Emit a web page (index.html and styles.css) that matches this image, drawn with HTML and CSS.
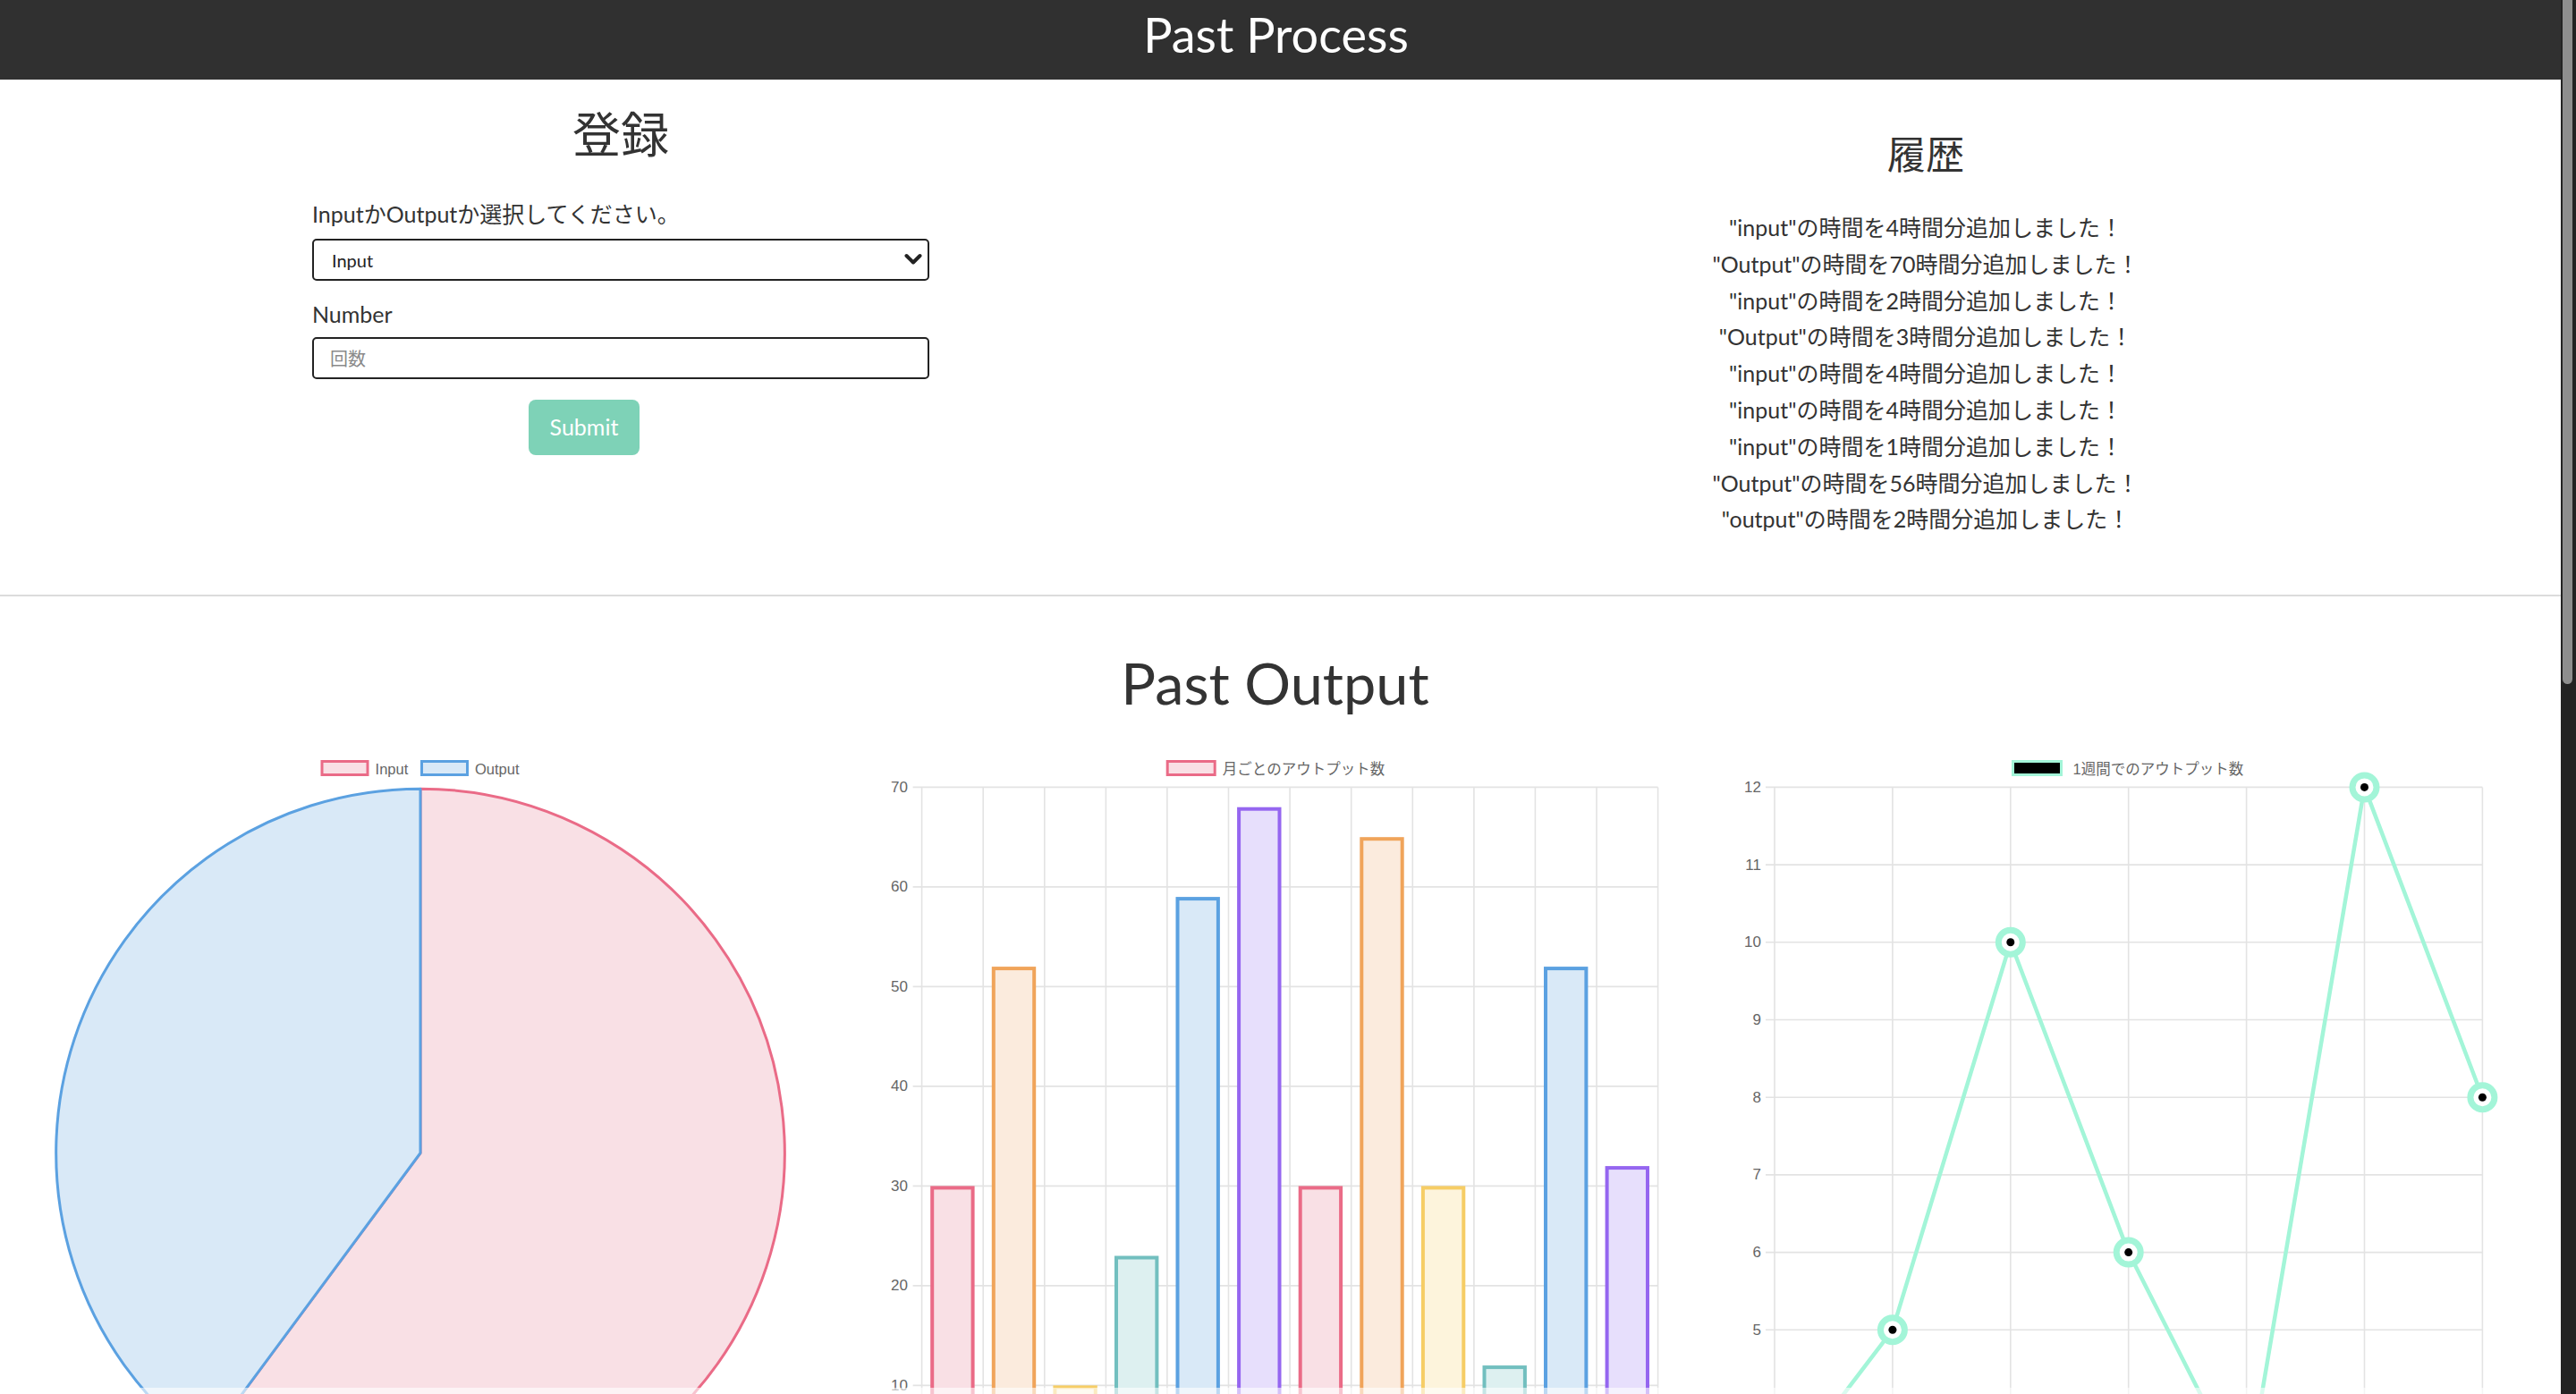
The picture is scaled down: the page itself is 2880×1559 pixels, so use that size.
FILE: index.html
```html
<!DOCTYPE html>
<html lang="ja">
<head>
<meta charset="utf-8">
<title>Past Process</title>
<link rel="stylesheet" href="styles.css">
</head>
<body>
<div class="window">
  <div class="page">
    <header class="site-header">
      <h1 class="site-title">Past Process</h1>
    </header>

    <section class="top">
      <div class="register">
        <h2 class="register-title">登録</h2>
        <form class="register-form">
          <label class="field-label" for="kind">InputかOutputか選択してください。</label>
          <div class="select-wrap">
            <select id="kind" class="field field-select">
              <option>Input</option>
              <option>Output</option>
            </select>
            <svg class="chevron" width="20" height="14" viewBox="0 0 20 14"><path d="M2.5 3 L10 10.5 L17.5 3" fill="none" stroke="#222" stroke-width="4" stroke-linecap="round" stroke-linejoin="round"/></svg>
          </div>
          <label class="field-label field-label-number" for="num">Number</label>
          <input id="num" class="field" type="text" placeholder="回数">
          <div class="submit-row">
            <button type="button" class="submit">Submit</button>
          </div>
        </form>
      </div>

      <div class="history">
        <h3 class="history-title">履歴</h3>
        <ul class="history-list">
          <li>"input"の時間を4時間分追加しました！</li>
          <li>"Output"の時間を70時間分追加しました！</li>
          <li>"input"の時間を2時間分追加しました！</li>
          <li>"Output"の時間を3時間分追加しました！</li>
          <li>"input"の時間を4時間分追加しました！</li>
          <li>"input"の時間を4時間分追加しました！</li>
          <li>"input"の時間を1時間分追加しました！</li>
          <li>"Output"の時間を56時間分追加しました！</li>
          <li>"output"の時間を2時間分追加しました！</li>
        </ul>
      </div>
    </section>

    <hr class="divider">

    <section class="output">
      <h1 class="output-title">Past Output</h1>
      <div class="charts">
        <div class="chart">
          <svg class="chart-svg" width="954" height="720" viewBox="0 0 954 720">
            <rect x="367" y="11.5" width="51" height="15" fill="#f9e0e5" stroke="#ea6b87" stroke-width="3"/>
            <text class="legend-text" x="426.6" y="19.5">Input</text>
            <rect x="478.5" y="11.5" width="51" height="15" fill="#d9e9f7" stroke="#5ba1e1" stroke-width="3"/>
            <text class="legend-text" x="538" y="19.5">Output</text>
            <path d="M477 449.5 L477 42.2 A407.3 407.3 0 1 1 234.7 776.9 Z" fill="#f9e0e5" stroke="#ea6b87" stroke-width="3" stroke-linejoin="round"/>
            <path d="M477 449.5 L234.7 776.9 A407.3 407.3 0 0 1 477 42.2 Z" fill="#d9e9f7" stroke="#5ba1e1" stroke-width="3" stroke-linejoin="round"/>
          </svg>
        </div>

        <div class="chart">
          <svg class="chart-svg" width="954" height="720" viewBox="0 0 954 720">
            <rect x="358.2" y="11.5" width="53" height="15" fill="#f9e0e5" stroke="#ea6b87" stroke-width="3"/>
            <text class="legend-text" x="419.8" y="19.5">月ごとのアウトプット数</text>
            <g class="grid">
              <line x1="73.6" y1="40.4" x2="906.6" y2="40.4"/>
              <line x1="73.6" y1="151.9" x2="906.6" y2="151.9"/>
              <line x1="73.6" y1="263.4" x2="906.6" y2="263.4"/>
              <line x1="73.6" y1="374.9" x2="906.6" y2="374.9"/>
              <line x1="73.6" y1="486.4" x2="906.6" y2="486.4"/>
              <line x1="73.6" y1="597.9" x2="906.6" y2="597.9"/>
              <line x1="73.6" y1="709.4" x2="906.6" y2="709.4"/>
              <line x1="83.6" y1="40.4" x2="83.6" y2="730"/>
              <line x1="152.2" y1="40.4" x2="152.2" y2="730"/>
              <line x1="220.8" y1="40.4" x2="220.8" y2="730"/>
              <line x1="289.4" y1="40.4" x2="289.4" y2="730"/>
              <line x1="357.9" y1="40.4" x2="357.9" y2="730"/>
              <line x1="426.5" y1="40.4" x2="426.5" y2="730"/>
              <line x1="495.1" y1="40.4" x2="495.1" y2="730"/>
              <line x1="563.7" y1="40.4" x2="563.7" y2="730"/>
              <line x1="632.3" y1="40.4" x2="632.3" y2="730"/>
              <line x1="700.9" y1="40.4" x2="700.9" y2="730"/>
              <line x1="769.4" y1="40.4" x2="769.4" y2="730"/>
              <line x1="838.0" y1="40.4" x2="838.0" y2="730"/>
              <line x1="906.6" y1="40.4" x2="906.6" y2="730"/>
            </g>
            <g class="tick-text">
              <text x="68" y="40.4">70</text>
              <text x="68" y="151.9">60</text>
              <text x="68" y="263.4">50</text>
              <text x="68" y="374.9">40</text>
              <text x="68" y="486.4">30</text>
              <text x="68" y="597.9">20</text>
              <text x="68" y="709.4">10</text>
            </g>
            <g class="bars" stroke-width="4">
              <rect x="95.2" y="488.4" width="45.4" height="300" fill="#f9e0e5" stroke="#ea6b87"/>
              <rect x="163.8" y="243.1" width="45.4" height="560" fill="#fbebdd" stroke="#f0a45a"/>
              <rect x="232.4" y="711.4" width="45.4" height="100" fill="#fdf4dc" stroke="#f6cd65"/>
              <rect x="301.0" y="566.5" width="45.4" height="220" fill="#ddf0f0" stroke="#72bfbf"/>
              <rect x="369.5" y="165.1" width="45.4" height="640" fill="#d9e9f7" stroke="#5ba1e1"/>
              <rect x="438.1" y="64.7" width="45.4" height="740" fill="#e7dffc" stroke="#9566f0"/>
              <rect x="506.7" y="488.4" width="45.4" height="300" fill="#f9e0e5" stroke="#ea6b87"/>
              <rect x="575.3" y="98.2" width="45.4" height="700" fill="#fbebdd" stroke="#f0a45a"/>
              <rect x="643.9" y="488.4" width="45.4" height="300" fill="#fdf4dc" stroke="#f6cd65"/>
              <rect x="712.5" y="689.1" width="45.4" height="120" fill="#ddf0f0" stroke="#72bfbf"/>
              <rect x="781.0" y="243.1" width="45.4" height="560" fill="#d9e9f7" stroke="#5ba1e1"/>
              <rect x="849.6" y="466.1" width="45.4" height="320" fill="#e7dffc" stroke="#9566f0"/>
            </g>
          </svg>
        </div>

        <div class="chart">
          <svg class="chart-svg" width="954" height="720" viewBox="0 0 954 720">
            <rect x="349.5" y="11.5" width="54" height="15" fill="#000" stroke="#a3f5d8" stroke-width="3"/>
            <text class="legend-text" x="416.5" y="19.5">1週間でのアウトプット数</text>
            <g class="grid">
              <line x1="73" y1="40.4" x2="874.4" y2="40.4"/>
              <line x1="73" y1="127.1" x2="874.4" y2="127.1"/>
              <line x1="73" y1="213.8" x2="874.4" y2="213.8"/>
              <line x1="73" y1="300.5" x2="874.4" y2="300.5"/>
              <line x1="73" y1="387.2" x2="874.4" y2="387.2"/>
              <line x1="73" y1="473.9" x2="874.4" y2="473.9"/>
              <line x1="73" y1="560.6" x2="874.4" y2="560.6"/>
              <line x1="73" y1="647.3" x2="874.4" y2="647.3"/>
              <line x1="83" y1="40.4" x2="83" y2="730"/>
              <line x1="214.9" y1="40.4" x2="214.9" y2="730"/>
              <line x1="346.8" y1="40.4" x2="346.8" y2="730"/>
              <line x1="478.7" y1="40.4" x2="478.7" y2="730"/>
              <line x1="610.6" y1="40.4" x2="610.6" y2="730"/>
              <line x1="742.5" y1="40.4" x2="742.5" y2="730"/>
              <line x1="874.4" y1="40.4" x2="874.4" y2="730"/>
            </g>
            <g class="tick-text">
              <text x="68" y="40.4">12</text>
              <text x="68" y="127.1">11</text>
              <text x="68" y="213.8">10</text>
              <text x="68" y="300.5">9</text>
              <text x="68" y="387.2">8</text>
              <text x="68" y="473.9">7</text>
              <text x="68" y="560.6">6</text>
              <text x="68" y="647.3">5</text>
            </g>
            <polyline points="83,820.7 214.9,647.3 346.8,213.8 478.7,560.6 610.6,820.7 742.5,40.4 874.4,387.2" fill="none" stroke="#a3f5d8" stroke-width="4.5" stroke-linejoin="round"/>
            <g class="points">
              <circle cx="214.9" cy="647.3" r="13.5"/>
              <circle cx="346.8" cy="213.8" r="13.5"/>
              <circle cx="478.7" cy="560.6" r="13.5"/>
              <circle cx="742.5" cy="40.4" r="13.5"/>
              <circle cx="874.4" cy="387.2" r="13.5"/>
            </g>
            <g class="dots">
              <circle cx="214.9" cy="647.3" r="4.5"/>
              <circle cx="346.8" cy="213.8" r="4.5"/>
              <circle cx="478.7" cy="560.6" r="4.5"/>
              <circle cx="742.5" cy="40.4" r="4.5"/>
              <circle cx="874.4" cy="387.2" r="4.5"/>
            </g>
          </svg>
        </div>
      </div>
    </section>

    <div class="scroll-fade"></div>
  </div>
  <div class="scrollbar"><div class="scrollbar-thumb"></div></div>
</div>
</body>
</html>
```

FILE: styles.css
```css
html, body {
  margin: 0;
  padding: 0;
  height: 1559px;
  overflow: hidden;
  background: #fff;
}

body {
  font-family: Lato, "Noto Sans CJK JP", sans-serif;
  color: #333;
}

.window {
  display: flex;
  height: 1559px;
}

.page {
  flex: 1;
  position: relative;
  overflow: hidden;
  background: #fff;
}

.scrollbar {
  width: 17px;
  flex: none;
  background: #232323;
  padding: 0 4px 0 2px;
  box-sizing: border-box;
}

.scrollbar-thumb {
  height: 765px;
  background: #8e8e8e;
  border-radius: 0 0 6px 6px;
}

/* header */
.site-header {
  height: 89px;
  background: #303030;
  display: flex;
  justify-content: center;
  align-items: flex-start;
  padding: 12px 10px 0 0;
  box-sizing: border-box;
}

.site-title {
  margin: 0;
  font-size: 54px;
  line-height: 54px;
  font-weight: 400;
  color: #fff;
}

/* top section */
.top {
  display: grid;
  grid-template-columns: 1388px 1390px;
  column-gap: 70px;
  padding: 0 15px 64px 0;
}

.register-title {
  margin: 30px 0 0;
  font-size: 54px;
  line-height: 64px;
  font-weight: 400;
  text-align: center;
}

.register-form {
  width: 690px;
  margin: 38px auto 0;
}

.field-label {
  display: block;
  font-size: 25px;
  line-height: 36px;
  margin-bottom: 10px;
}

.field-label-number {
  margin-top: 19px;
  margin-bottom: 8px;
}

.select-wrap {
  position: relative;
}

.field {
  display: block;
  width: 100%;
  height: 47px;
  box-sizing: border-box;
  border: 2px solid #222;
  border-radius: 5px;
  background: #fff;
  font-family: Lato, "Noto Sans CJK JP", sans-serif;
  font-size: 20px;
  color: #222;
  padding: 0 18px;
  margin: 0;
  outline: none;
}

.field-select {
  appearance: none;
  -webkit-appearance: none;
  padding-left: 20px;
}

.field::placeholder {
  color: #8a8a8a;
}

.chevron {
  position: absolute;
  right: 8px;
  top: 16px;
  pointer-events: none;
}

.submit-row {
  margin-top: 23px;
  padding-left: 242px;
}

.submit {
  display: flex;
  align-items: center;
  justify-content: center;
  width: 124px;
  height: 62px;
  border: none;
  border-radius: 8px;
  background: #7ed2b7;
  color: #fff;
  font-family: Lato, "Noto Sans CJK JP", sans-serif;
  font-size: 25px;
  padding: 0 0 2px;
}

.history {
  text-align: center;
}

.history-title {
  margin: 57px 0 0;
  font-size: 43.2px;
  line-height: 52px;
  font-weight: 400;
}

.history-list {
  list-style: none;
  margin: 36px 0 0;
  padding: 0;
  font-size: 25px;
  line-height: 40.8px;
}

.divider {
  margin: 0;
  border: none;
  height: 2px;
  background: #dcdcdc;
}

/* output section */
.output {
  padding-right: 12px;
}

.output-title {
  margin: 57px 0 0;
  font-size: 64.8px;
  line-height: 78px;
  font-weight: 400;
  text-align: center;
}

.charts {
  display: grid;
  grid-template-columns: 1fr 1fr 1fr;
  margin: 38px -4px 0 -7px;
}

.chart {
  height: 720px;
}

.chart-svg {
  display: block;
  overflow: visible;
}

.legend-text {
  font-family: "Liberation Sans", "Noto Sans CJK JP", sans-serif;
  font-size: 16.5px;
  fill: #666;
  dominant-baseline: central;
}

.tick-text text {
  font-family: "Liberation Sans", sans-serif;
  font-size: 17px;
  fill: #666;
  text-anchor: end;
  dominant-baseline: central;
}

.grid line {
  stroke: #e3e3e3;
  stroke-width: 1.6;
}

.points circle {
  fill: #fff;
  stroke: #a3f5d8;
  stroke-width: 7;
}

.dots circle {
  fill: #000;
}

.scroll-fade {
  position: absolute;
  left: 0;
  right: 0;
  bottom: 0;
  height: 7px;
  background: rgba(255, 255, 255, 0.6);
}
```
